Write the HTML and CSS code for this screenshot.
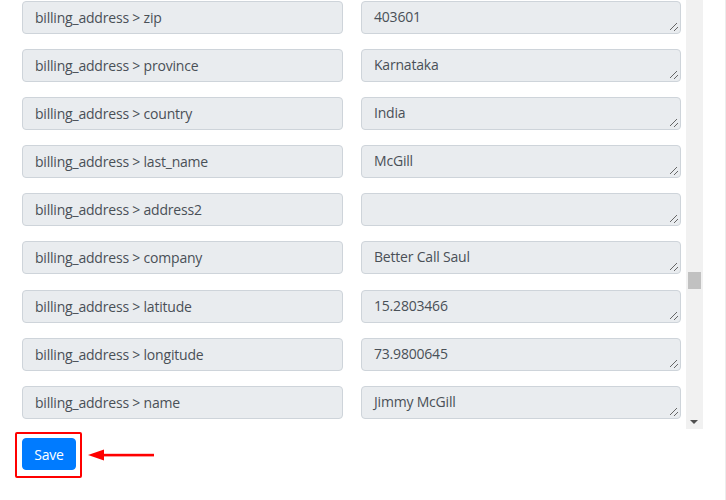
FILE: index.html
```html
<!DOCTYPE html>
<html>
<head>
<meta charset="utf-8">
<link rel="stylesheet" href="styles.css">
</head>
<body>
<div class="frame">
  <div class="pane">
    <div class="list">
      <div class="row"><div class="field">billing_address &gt; zip</div><div class="area">403601<span class="grip"></span></div></div>
      <div class="row"><div class="field">billing_address &gt; province</div><div class="area">Karnataka<span class="grip"></span></div></div>
      <div class="row"><div class="field">billing_address &gt; country</div><div class="area">India<span class="grip"></span></div></div>
      <div class="row"><div class="field">billing_address &gt; last_name</div><div class="area">McGill<span class="grip"></span></div></div>
      <div class="row"><div class="field">billing_address &gt; address2</div><div class="area"><span class="grip"></span></div></div>
      <div class="row"><div class="field">billing_address &gt; company</div><div class="area">Better Call Saul<span class="grip"></span></div></div>
      <div class="row"><div class="field">billing_address &gt; latitude</div><div class="area">15.2803466<span class="grip"></span></div></div>
      <div class="row"><div class="field">billing_address &gt; longitude</div><div class="area">73.9800645<span class="grip"></span></div></div>
      <div class="row"><div class="field">billing_address &gt; name</div><div class="area">Jimmy McGill<span class="grip"></span></div></div>
    </div>
    <div class="scrollbar">
      <div class="thumb"></div>
      <div class="down"></div>
    </div>
  </div>
  <div class="actions">
    <div class="highlight"><button class="save">Save</button></div>
    <svg class="arrow" width="70" height="14" viewBox="0 0 70 14">
      <polygon points="0,7 16,1.5 16,12.5" fill="#ff0000"/>
      <rect x="14" y="5.8" width="52" height="2.6" fill="#ff0000"/>
    </svg>
  </div>
</div>
</body>
</html>
```
FILE: styles.css
```css
html, body {
  margin: 0;
  padding: 0;
  background: #ffffff;
}
body {
  font-family: "Open Sans", "Segoe UI", Arial, sans-serif;
  width: 726px;
  height: 500px;
  overflow: hidden;
}
.frame {
  width: 725px;
  height: 500px;
  border-right: 1px solid #ececec;
}
.pane {
  display: flex;
  height: 429px;
}
.list {
  box-sizing: border-box;
  width: 686px;
  flex: none;
  padding: 1px 5px 0 22px;
  display: flex;
  flex-direction: column;
  gap: 15.1px;
  overflow: hidden;
}
.row {
  display: flex;
  gap: 18px;
  flex: none;
}
.field, .area {
  box-sizing: border-box;
  height: 33px;
  background: #e9ecef;
  border: 1px solid #ced4da;
  border-radius: 4px;
  color: #495057;
  font-size: 14px;
  letter-spacing: -0.2px;
}
.field {
  width: 321px;
  padding: 0 12px;
  display: flex;
  align-items: center;
}
.area {
  width: 320px;
  padding: 5px 12px 0;
  line-height: 20px;
  position: relative;
}
.grip {
  position: absolute;
  right: 2px;
  bottom: 2px;
  width: 8px;
  height: 8px;
  background:
    linear-gradient(135deg, transparent 0 42%, #666 42% 50%, transparent 50% 71%, #666 71% 79%, transparent 79%);
}
.scrollbar {
  width: 17px;
  background: #f1f1f1;
  position: relative;
  flex: none;
}
.thumb {
  position: absolute;
  left: 2px;
  top: 272px;
  width: 13px;
  height: 17px;
  background: #c1c1c1;
}
.down {
  position: absolute;
  left: 4px;
  bottom: 5px;
  width: 0;
  height: 0;
  border-left: 4px solid transparent;
  border-right: 4px solid transparent;
  border-top: 4px solid #505050;
}
.actions {
  display: flex;
  align-items: center;
  padding: 3px 0 0 15px;
  gap: 6px;
}
.highlight {
  border: 2px solid #ff0000;
  border-radius: 2px;
  padding: 4px 4px 6px 5px;
  display: flex;
}
.save {
  background: #007bff;
  border: 1px solid #007bff;
  color: #ffffff;
  border-radius: 4px;
  font-family: "Open Sans", "Segoe UI", Arial, sans-serif;
  font-size: 14px;
  width: 54px;
  height: 32px;
  padding: 0;
  letter-spacing: -0.2px;
}
.arrow {
  display: block;
}
```
